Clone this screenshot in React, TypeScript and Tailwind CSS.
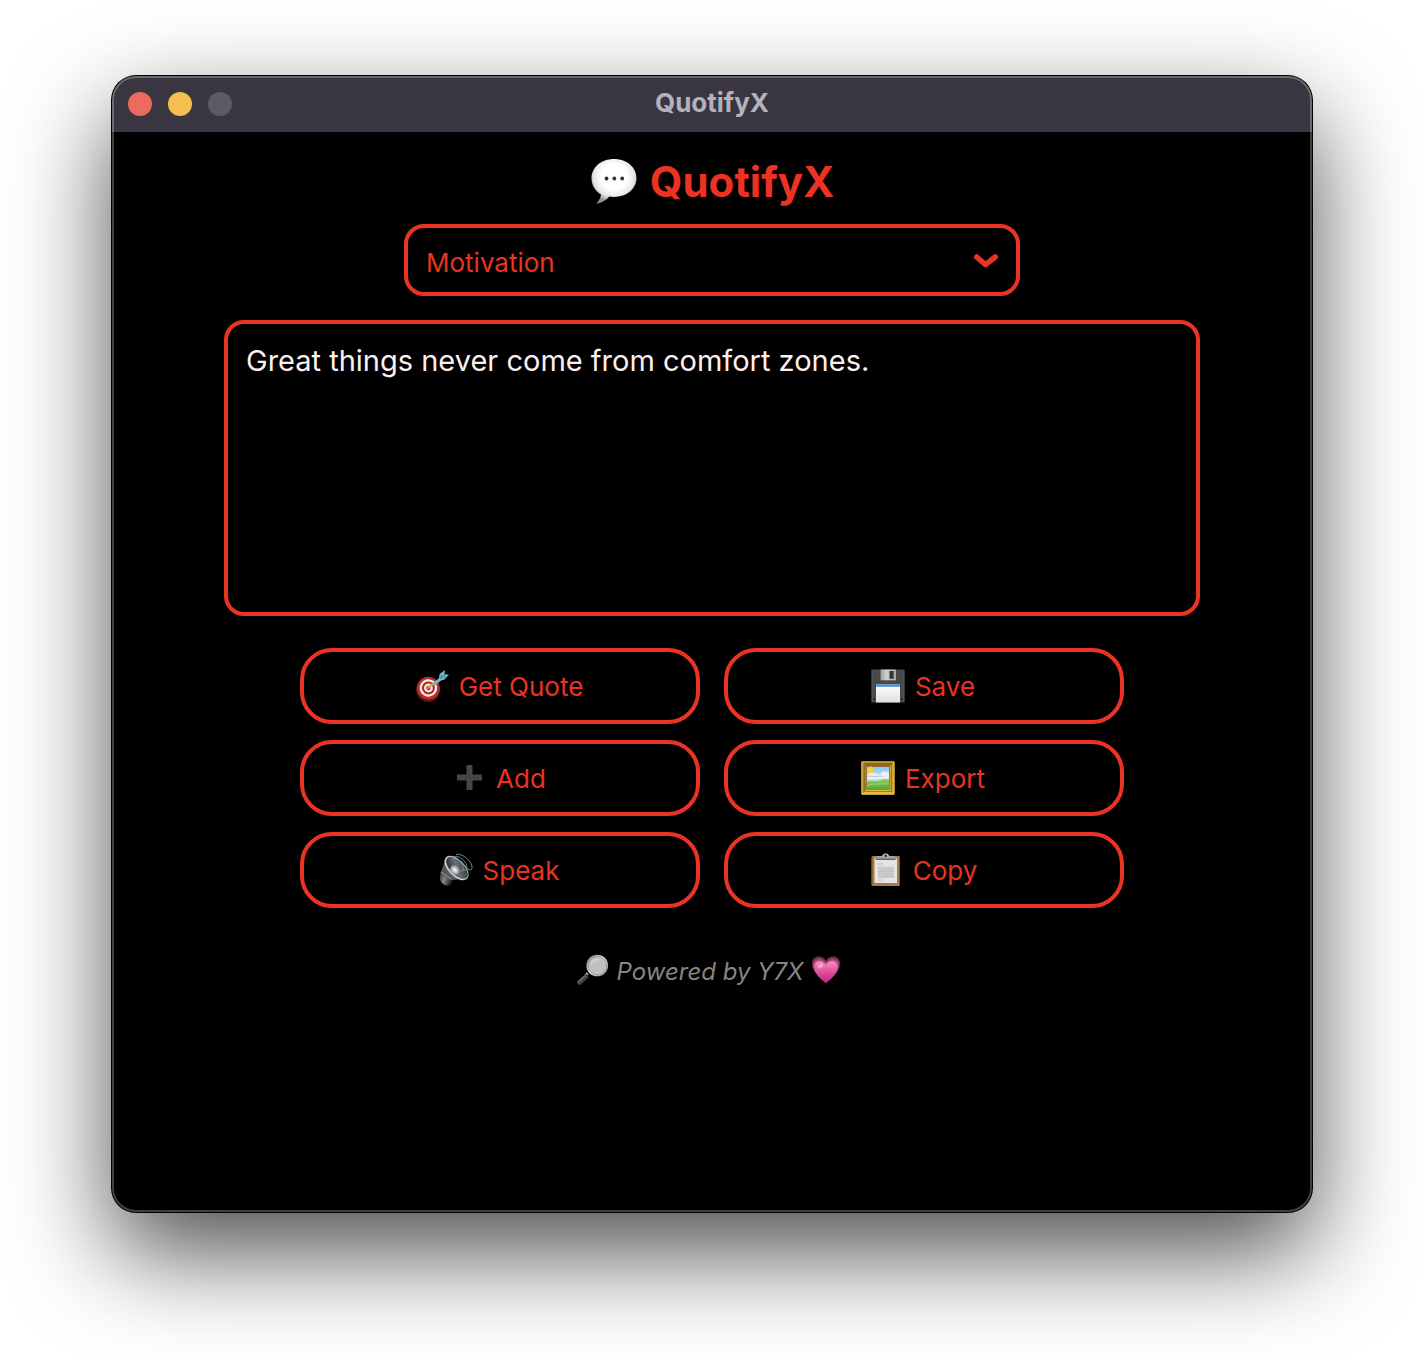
import { useState } from "react";
import type { ReactNode } from "react";

function SpeechIcon() {
  return (
    <svg viewBox="0 0 48 48" className="size-12 shrink-0" aria-hidden="true">
      <defs>
        <radialGradient id="speech-fill" cx="0.5" cy="0.4" r="0.58">
          <stop offset="0.5" stopColor="#ffffff" />
          <stop offset="0.78" stopColor="#e6e6e6" />
          <stop offset="1" stopColor="#8f8f8f" />
        </radialGradient>
      </defs>
      <path
        d="M24 1C11 1 1.500 9.500 1.500 20.300c0 7.200 3.800 13 9.500 16.200-.5 3.800-2.300 6.800-4.800 8.900 5.200.1 9.800-2.900 13-6.800 1.600.3 3.200.4 4.800.4 13 0 22.500-8.200 22.500-18.900S37 1 24 1Z"
        fill="url(#speech-fill)"
      />
      <circle cx="16.500" cy="20.500" r="1.900" fill="#333" />
      <circle cx="24.300" cy="20.500" r="1.900" fill="#333" />
      <circle cx="32.200" cy="20.500" r="1.900" fill="#333" />
    </svg>
  );
}

function TargetIcon() {
  return (
    <svg viewBox="0 0 34 34" className="size-[34px] shrink-0" aria-hidden="true">
      <g transform="rotate(35 13 19.500)">
        <ellipse cx="13.800" cy="20.500" rx="12" ry="11.800" fill="#6e1716" />
        <ellipse cx="13" cy="19" rx="11.500" ry="11.300" fill="#b82f2a" />
        <ellipse cx="13" cy="18.800" rx="8.800" ry="8.700" fill="#f4eeee" />
        <ellipse cx="13" cy="18.800" rx="6.600" ry="6.500" fill="#b32d29" />
        <ellipse cx="13" cy="18.800" rx="4.400" ry="4.300" fill="#f4eeee" />
        <ellipse cx="13" cy="18.800" rx="2.200" ry="2.100" fill="#a82622" />
      </g>
      <path d="m13 19 7-6" stroke="#d9a843" strokeWidth="2" strokeLinecap="round" />
      <path d="m17.500 14.500 7.800-6.500 2.200 2.400-7.200 5.600c-1.500.8-3.500.2-2.800-1.500Z" fill="#69b9c1" />
      <path d="m24 9.500.6-4.500L30 1l-.6 4.200 4.600.6-4.800 5-4.200.7Z" fill="#74bdc5" />
      <path d="m25 10 5.500-5.500M26.500 5.500l-.3 3.300M31 7l-3.500 2.300" stroke="#2f747e" strokeWidth="0.8" />
    </svg>
  );
}

function FloppyIcon() {
  return (
    <svg viewBox="0 0 34 34" className="size-[34px] shrink-0" aria-hidden="true">
      <defs>
        <linearGradient id="floppy-shutter" x1="0" x2="1">
          <stop stopColor="#9a9c9d" />
          <stop offset="0.4" stopColor="#d0d2d2" />
          <stop offset="1" stopColor="#a5a7a8" />
        </linearGradient>
        <linearGradient id="floppy-label" x1="0" y1="0" x2="0" y2="1">
          <stop stopColor="#ffffff" />
          <stop offset="1" stopColor="#dedede" />
        </linearGradient>
      </defs>
      <path d="M.5.5h32l1 1v32H.5Z" fill="#484848" />
      <path d="M1.200 1v32M32.800 1.500v31.500" stroke="#5c5c5c" />
      <path d="M9.500.5H25v10.800H9.500Z" fill="url(#floppy-shutter)" />
      <path d="M18.500 2h4.200v7.800h-4.200Z" fill="#353535" />
      <path d="M5 15.500h24v18H5Z" fill="url(#floppy-label)" />
      <path d="M5 15.500h24v2.300H5Z" fill="#4a8fd6" />
      <path d="M2 29h1.500v2H2ZM30.500 29H32v2h-1.500Z" fill="#1c1c1c" />
    </svg>
  );
}

function PlusIcon() {
  return (
    <svg viewBox="0 0 34 34" className="size-[34px] shrink-0" aria-hidden="true">
      <path d="M14.500 4h6v9.500h9.500v6h-9.500V29h-6v-9.500H5v-6h9.500Z" fill="#464646" />
    </svg>
  );
}

function PictureIcon() {
  return (
    <svg viewBox="0 0 34 34" className="size-[34px] shrink-0" aria-hidden="true">
      <defs>
        <linearGradient id="picture-sky" x1="0" y1="0" x2="0" y2="1">
          <stop stopColor="#8bc8ef" />
          <stop offset="1" stopColor="#e3eff5" />
        </linearGradient>
        <linearGradient id="picture-grass" x1="0" y1="0" x2="0" y2="1">
          <stop stopColor="#9bd35f" />
          <stop offset="1" stopColor="#55a83a" />
        </linearGradient>
      </defs>
      <path d="M.5.5h33v33H.5Z" fill="#cfa235" />
      <path d="M.5.500h33l-5.500 5.500H6Z" fill="#94691f" />
      <path d="m.5.5 5.500 5.500v22L.5 33.500Z" fill="#b0822c" />
      <path d="m.5 33.500 5.500-5.500h22l5.500 5.500Z" fill="#e0b93e" />
      <path d="M1 1h32v32H1Z" fill="none" stroke="#e3c14d" />
      <path d="M3.500 3.500h27v27h-27Z" fill="none" stroke="#8b6119" strokeWidth="0.700" />
      <path d="M5.500 5.500h23v23h-23Z" fill="url(#picture-sky)" stroke="#805b1b" strokeWidth="0.700" />
      <circle cx="9.500" cy="9" r="3.400" fill="#f5cf3d" />
      <path d="M6 16c0-4 4-5 5.500-3.500 1.500-2 4-1 4.500 1 2-1 3 0 3 1 1-4 4-5 5-3.500 2-1 4 0 4 2v5H6Z" fill="#eceff0" />
      <path d="M6 15.500c3-1 7 .5 10 0s4.500-.5 6 .5" fill="none" stroke="#b7cbd4" />
      <path d="M6 20.500c5-2.500 8 .5 12-1 4-1.700 6-2.500 10-1v9.500H6Z" fill="url(#picture-grass)" />
      <path d="M6 25c6-3 12-1 22-3" fill="none" stroke="#91ce57" strokeWidth="1.500" />
    </svg>
  );
}

function SpeakerIcon() {
  return (
    <svg viewBox="0 0 34 34" className="size-[34px] shrink-0" aria-hidden="true">
      <defs>
        <linearGradient id="speaker-magnet" x1="0" y1="0" x2="1" y2="0.5">
          <stop stopColor="#292929" />
          <stop offset="0.5" stopColor="#858585" />
          <stop offset="1" stopColor="#1e1e1e" />
        </linearGradient>
        <linearGradient id="speaker-cone" x1="0" y1="0" x2="1" y2="1">
          <stop stopColor="#161719" />
          <stop offset="0.5" stopColor="#6b6f73" />
          <stop offset="1" stopColor="#222427" />
        </linearGradient>
        <radialGradient id="speaker-cap">
          <stop stopColor="#ffffff" />
          <stop offset="1" stopColor="#898e92" />
        </radialGradient>
      </defs>
      <path d="M1.500 18 14 26.500l-2 5.500c-5 2-10-1-11-6Z" fill="url(#speaker-magnet)" />
      <path d="M6 8 2 18.500c2 5 8 8.500 14 8.500l12-2.500Z" fill="#55585b" />
      <path d="m2 19 11 7.500" stroke="#b4b4b4" strokeWidth="0.800" />
      <ellipse cx="17.500" cy="15" rx="8.300" ry="15" transform="rotate(-44 17.500 15)" fill="#c8cbcd" />
      <ellipse cx="18" cy="14.800" rx="6.900" ry="13.700" transform="rotate(-44 18 14.800)" fill="url(#speaker-cone)" />
      <ellipse cx="15.800" cy="17" rx="4.200" ry="5.200" transform="rotate(-44 15.800 17)" fill="url(#speaker-cap)" />
      <g fill="none" stroke="#689aa5" strokeWidth="0.900">
        <path d="M14.500 5.500c3-1 10 5 10 11 0 3-4 2-6-1" />
        <path d="M15.500 3.500c4-1.500 13 5 12.500 12 0 2.500-3 2-5 .5" />
        <path d="M17 1.500c5-2 17 6.500 16 13.500-.4 3-3.500 2-5.500 0" />
      </g>
    </svg>
  );
}

function ClipboardIcon() {
  return (
    <svg viewBox="0 0 34 34" className="size-[34px] shrink-0" aria-hidden="true">
      <defs>
        <linearGradient id="clipboard-clip" x1="0" y1="0" x2="0" y2="1">
          <stop stopColor="#d5d8dc" />
          <stop offset="1" stopColor="#777c83" />
        </linearGradient>
      </defs>
      <rect x="2.500" y="3" width="28.500" height="30" rx="1.500" fill="#a67e43" />
      <path d="M3 4.500v27.500M30.500 4.500v27.500" stroke="#775326" />
      <path d="M5.500 5.500h22.500v24.500h-22.500Z" fill="#e4e4e4" />
      <path d="M8.500 11h6M8.500 27h5" stroke="#bdbdbd" strokeWidth="0.900" />
      <path d="M9 13.500h16v11.500h-16Z" fill="#cdcdcd" />
      <path d="M9 16h16M9 18.500h16M9 21h16M9 23.500h16" stroke="#c0c0c0" strokeWidth="0.900" />
      <path d="M7 7V4.500c0-.8.700-1.300 1.500-1.300h4c1 0 1.500-2.700 4.200-2.700s3.300 2.700 4.300 2.700h4c.8 0 1.500.5 1.500 1.300V7Z" fill="url(#clipboard-clip)" />
      <circle cx="16.700" cy="2.800" r="1.200" fill="#22252a" />
      <path d="M7 6.500h19.500" stroke="#555960" strokeWidth="0.800" />
    </svg>
  );
}

function MagnifierIcon() {
  return (
    <svg viewBox="0 0 32 32" className="size-8 shrink-0" aria-hidden="true">
      <defs>
        <linearGradient id="magnifier-rim" x1="0" y1="0" x2="1" y2="1">
          <stop stopColor="#6e7277" />
          <stop offset="0.5" stopColor="#e1e4e6" />
          <stop offset="1" stopColor="#85898e" />
        </linearGradient>
      </defs>
      <path d="m10.800 19.200-2.500 2.500" stroke="#b1b4b9" strokeWidth="2.500" />
      <path d="m9 22.500-6.500 6" stroke="#3f444c" strokeWidth="4.600" strokeLinecap="round" />
      <path d="m8 21.800-6.300 5.900" stroke="#969ca5" strokeWidth="1" strokeLinecap="round" />
      <circle cx="20.200" cy="11.500" r="10.800" fill="url(#magnifier-rim)" />
      <circle cx="20.500" cy="11.700" r="9.300" fill="#bfbfbf" stroke="#858585" strokeWidth="0.600" />
      <path d="M14 11a6.500 6.500 0 0 1 8.500-5" fill="none" stroke="#d2d2d2" strokeWidth="1.500" />
    </svg>
  );
}

const HEART =
  "M15 28.500C10 24.500 1 17.500 1 9.500 1 1.500 11 .2 15 6.800 19 .2 29 1.500 29 9.500c0 8-9 15-14 19Z";

function HeartIcon() {
  return (
    <svg viewBox="0 0 32 32" className="size-8 shrink-0" aria-hidden="true">
      <defs>
        <linearGradient id="heart-fill" x1="0" y1="0" x2="0" y2="1">
          <stop stopColor="#f98fc2" />
          <stop offset="0.45" stopColor="#e0529c" />
          <stop offset="1" stopColor="#b92777" />
        </linearGradient>
      </defs>
      <path d={HEART} fill="#75304f" />
      <path d={HEART} fill="#b04a80" transform="translate(1.200 2.600) scale(.92)" />
      <path d={HEART} fill="url(#heart-fill)" transform="translate(2.300 5.200) scale(.84)" />
      <ellipse cx="9.500" cy="12" rx="3" ry="2" fill="#ffc2df" opacity=".6" transform="rotate(-35 9.500 12)" />
    </svg>
  );
}

function ActionButton({ icon, label, onClick }: { icon: ReactNode; label: string; onClick?: () => void }) {
  return (
    <button
      type="button"
      onClick={onClick}
      className="flex h-[76px] items-center justify-center gap-2.5 rounded-[32px] border-4 border-[#eb3323] bg-black pr-0.5 text-[26px] leading-8 text-[#eb3323]"
    >
      {icon}
      <span className="pt-0.5">{label}</span>
    </button>
  );
}

const CATEGORIES = ["Motivation", "Life", "Success"];

export default function App() {
  const [category, setCategory] = useState("Motivation");
  const [quote, setQuote] = useState("Great things never come from comfort zones.");

  return (
    <div className="flex min-h-screen flex-col overflow-hidden bg-white px-28 pt-[76px] pb-[148px] font-['Inter',sans-serif]">
      <div className="relative flex flex-1 flex-col rounded-3xl bg-black shadow-[0_0_0_1px_#000,0_40px_100px_rgba(0,0,0,0.7)] after:pointer-events-none after:absolute after:inset-0 after:rounded-3xl after:border-2 after:border-white/25">
        <header className="grid h-14 shrink-0 grid-cols-[1fr_auto_1fr] items-center rounded-t-3xl bg-[#393641] px-4">
          <div className="flex gap-4">
            <button type="button" aria-label="Close" className="size-6 rounded-full bg-[#ec6a5e]" />
            <button type="button" aria-label="Minimize" className="size-6 rounded-full bg-[#f4bf4f]" />
            <button type="button" aria-label="Zoom" disabled className="size-6 rounded-full bg-[#5c5a64]" />
          </div>
          <p className="pb-0.5 text-[26px] leading-8 font-bold text-[#b4b1bc]">QuotifyX</p>
        </header>

        <main className="flex flex-col items-center px-28 pt-6">
          <h1 className="flex items-center gap-3 text-[42px] leading-[52px] font-bold text-[#eb3323]">
            <SpeechIcon />
            <span>QuotifyX</span>
          </h1>

          <div className="relative mt-4 w-full max-w-[616px]">
            <select
              aria-label="Category"
              value={category}
              onChange={(e) => setCategory(e.target.value)}
              className="block h-[72px] w-full appearance-none rounded-[20px] border-4 border-[#eb3323] bg-black px-[18px] pt-1 text-[26px] text-[#eb3323]"
            >
              {CATEGORIES.map((name) => (
                <option key={name}>{name}</option>
              ))}
            </select>
            <svg
              viewBox="0 0 24 16"
              className="pointer-events-none absolute top-[29px] right-[22px] h-4 w-6"
              fill="none"
              stroke="#eb3323"
              strokeWidth="5.500"
              strokeLinecap="round"
              strokeLinejoin="round"
              aria-hidden="true"
            >
              <path d="m2.800 4 8.700 7.700 9.700-7.700" />
            </svg>
          </div>

          <textarea
            aria-label="Quote"
            value={quote}
            onChange={(e) => setQuote(e.target.value)}
            className="mt-6 block h-[296px] w-full resize-none rounded-[20px] border-4 border-[#eb3323] bg-black px-[18px] py-[18px] text-[29px] leading-[38px] text-[#fdf0f0] outline-none"
          />

          <div className="mt-8 grid w-full max-w-[824px] grid-cols-2 gap-x-6 gap-y-4">
            <ActionButton icon={<TargetIcon />} label="Get Quote" />
            <ActionButton icon={<FloppyIcon />} label="Save" />
            <ActionButton icon={<PlusIcon />} label="Add" />
            <ActionButton icon={<PictureIcon />} label="Export" />
            <ActionButton icon={<SpeakerIcon />} label="Speak" />
            <ActionButton icon={<ClipboardIcon />} label="Copy" />
          </div>

          <footer className="mt-11 flex items-center gap-2 pr-1 text-2xl text-[#858585] italic">
            <MagnifierIcon />
            <span className="pt-1">Powered by Y7X</span>
            <HeartIcon />
          </footer>
        </main>
      </div>
    </div>
  );
}
